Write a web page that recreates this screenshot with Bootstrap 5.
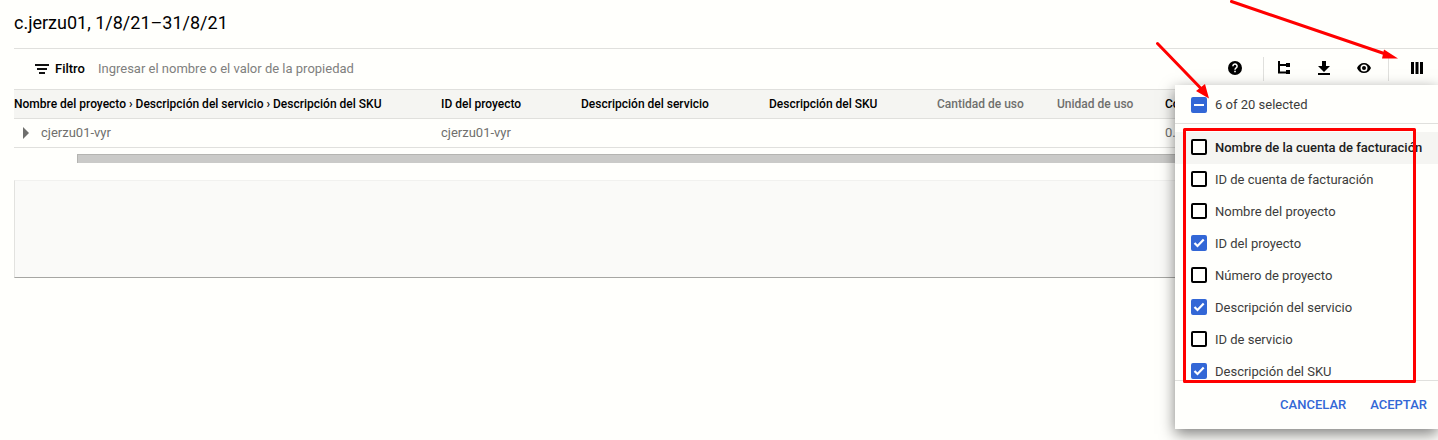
<!DOCTYPE html>
<html lang="es">
<head>
<meta charset="utf-8">
<meta name="viewport" content="width=device-width, initial-scale=1">
<title>Informe de costos</title>
<link rel="stylesheet" href="https://cdn.jsdelivr.net/npm/bootstrap@5.3.0/dist/css/bootstrap.min.css">
<style>
  body { font-family: Roboto, "Liberation Sans", sans-serif; font-size: 13px; line-height: 20px; background: #fffffc; color: #000; }
  .report { padding-left: 14px; }
  .report-title { font-size: 18px; line-height: 24px; padding: 11px 0 13px; font-weight: 400; }
  .toolbar { height: 41px; border-top: 1px solid #e0e0dd; padding-left: 20px; padding-right: 1px; }
  .filter-label { font-weight: 500; margin-left: 5px; margin-right: 13px; }
  .filter-input { border: 0; background: transparent; outline: 0; padding: 0; font-size: 13px; line-height: 20px; color: #000; }
  .filter-input::placeholder { color: #80807e; opacity: 1; }
  .tool-btn { display: flex; align-items: center; justify-content: center; width: 40px; height: 40px; padding: 0 0 2px; border: 0; border-radius: 0; color: #000; }
  .tool-sep { width: 1px; height: 24px; background: #e0e0dd; }
  .cost-table { table-layout: fixed; width: 100%; border-top: 1px solid #e0e0dd; margin: 0; white-space: nowrap; }
  .cost-table th, .cost-table td { height: 29px; padding: 0; overflow: hidden; border-bottom: 1px solid #e0e0dd; vertical-align: middle; }
  .cost-table th { background: #f5f5f2; font-weight: 500; font-size: 12px; }
  .cost-table th.muted, .cost-table td { color: #6f6f6d; }
  .c-path { width: 427px; } .c-id { width: 140px; } .c-service { width: 188px; }
  .c-sku { width: 168px; } .c-qty { width: 120px; } .c-unit { width: 108px; }
  .expander { border: 0; background: transparent; padding: 0 0 0 9px; width: 27px; line-height: 0; }
  .scroll-thumb { margin: 6px 0 0 63px; height: 9px; background: #cacac8; border: 1px solid #b4b4b1; border-width: 1px 0 0 1px; }
  .detail-panel { margin-top: 17px; height: 98px; background: #fafaf8; border: 1px solid #f1f1ef; border-left-color: #e2e2df; border-bottom-color: #a6a6a3; border-right: 0; }
  .column-menu { top: 36px; right: -1px; width: 263px; padding: 0; border: 0; border-radius: 0; background: #fffffc; font-size: 13px; color: #3c3c3b; box-shadow: 0 5px 14px rgba(0,0,0,.5); }
  .menu-row { height: 32px; padding-left: 16px; padding-bottom: 2px; gap: 8px; white-space: nowrap; color: #3c3c3b; }
  .menu-head { height: 39px; padding-top: 4px; border-bottom: 1px solid #e0e0dd; }
  .menu-list { height: 256px; padding-top: 8px; overflow: hidden; }
  .menu-list label { padding-top: 2px; }
  .menu-row.current { background: #f5f5f2; font-weight: 500; color: #202020; }
  .menu-row .form-check-input { width: 16px; height: 16px; margin: 0; flex: none; border: 2px solid #000; border-radius: 2px; background-color: #fffffc; }
  .menu-row .form-check-input:checked, .menu-row .form-check-input:indeterminate { background-color: #3367d6; border-color: #3367d6; background-size: 16px 16px; }
  .menu-row .form-check-input:checked { background-image: url("data:image/svg+xml,%3csvg xmlns='http://www.w3.org/2000/svg' viewBox='0 0 16 16'%3e%3cpath fill='none' stroke='%23fff' stroke-width='2.2' d='M3.5 8l3 3L12.7 4.5'/%3e%3c/svg%3e"); }
  .menu-row .form-check-input:indeterminate { background-image: url("data:image/svg+xml,%3csvg xmlns='http://www.w3.org/2000/svg' viewBox='0 0 16 16'%3e%3cpath fill='none' stroke='%23fff' stroke-width='2' d='M3 8h10'/%3e%3c/svg%3e"); }
  .menu-foot { height: 49px; border-top: 1px solid #e0e0dd; padding-right: 11px; gap: 24px; }
  .menu-foot .btn { padding: 0; border: 0; font-size: 13px; line-height: 20px; font-weight: 500; color: #3367d6; }
  .annotations { position: absolute; top: 0; right: 0; z-index: 1100; pointer-events: none; }
</style>
</head>
<body class="min-vh-100">
<main class="report min-vh-100">
  <h1 class="report-title m-0">c.jerzu01, 1/8/21–31/8/21</h1>

  <div class="toolbar d-flex align-items-center">
    <svg width="16" height="12" viewBox="0 0 16 12" aria-hidden="true"><path d="M1 2h14M3 6h10M5 10h6" stroke="#111" stroke-width="2"/></svg>
    <label class="filter-label" for="filter">Filtro</label>
    <input class="filter-input flex-grow-1" id="filter" type="text" placeholder="Ingresar el nombre o el valor de la propiedad">
    <button class="btn tool-btn" type="button" aria-label="Ayuda">
      <svg width="16" height="16" viewBox="0 0 16 16"><circle cx="8" cy="8" r="7" fill="#000"/><path d="M5.9 6.2a2.1 2.1 0 1 1 3.4 1.6C8.5 8.400 8 8.700 8 9.700" fill="none" stroke="#fff" stroke-width="1.5"/><path d="M7.200 10.700h1.600v1.600H7.200z" fill="#fff"/></svg>
    </button>
    <span class="tool-sep ms-2"></span>
    <button class="btn tool-btn" type="button" aria-label="Agrupar">
      <svg width="16" height="16" viewBox="0 0 16 16"><path d="M3 1v11.500h7M3 5h7" fill="none" stroke="#000" stroke-width="2"/><path d="M10 3h4v4h-4zM10 10h4v4h-4z"/></svg>
    </button>
    <button class="btn tool-btn" type="button" aria-label="Descargar">
      <svg width="16" height="16" viewBox="0 0 16 16"><path d="M6 1h4v5h4l-6 6-6-6h4zM2 13h12v2H2z"/></svg>
    </button>
    <button class="btn tool-btn" type="button" aria-label="Vista previa">
      <svg width="16" height="16" viewBox="0 0 16 16"><path fill-rule="evenodd" d="M8 3C4.800 3 2.200 5 1 8c1.200 3 3.800 5 7 5s5.800-2 7-5c-1.200-3-3.800-5-7-5zm0 1.500a3.500 3.500 0 1 1 0 7 3.500 3.500 0 0 1 0-7z"/><circle cx="8" cy="8" r="2"/></svg>
    </button>
    <span class="tool-sep ms-1 me-2"></span>
    <div class="dropdown">
      <button class="btn tool-btn" type="button" aria-label="Columnas" aria-expanded="true">
        <svg width="16" height="16" viewBox="0 0 16 16"><path d="M2 2h3v12H2zM6.500 2h3v12h-3zM11 2h3v12h-3z"/></svg>
      </button>
      <form class="dropdown-menu column-menu show">
        <div class="menu-head d-flex align-items-center">
          <div class="menu-row d-flex align-items-center"><input class="form-check-input" type="checkbox" id="all"><label for="all">6 of 20 selected</label></div>
        </div>
        <div class="menu-list">
          <div class="menu-row current d-flex align-items-center"><input class="form-check-input" type="checkbox" id="c1"><label for="c1">Nombre de la cuenta de facturación</label></div>
          <div class="menu-row d-flex align-items-center"><input class="form-check-input" type="checkbox" id="c2"><label for="c2">ID de cuenta de facturación</label></div>
          <div class="menu-row d-flex align-items-center"><input class="form-check-input" type="checkbox" id="c3"><label for="c3">Nombre del proyecto</label></div>
          <div class="menu-row d-flex align-items-center"><input class="form-check-input" type="checkbox" id="c4" checked><label for="c4">ID del proyecto</label></div>
          <div class="menu-row d-flex align-items-center"><input class="form-check-input" type="checkbox" id="c5"><label for="c5">Número de proyecto</label></div>
          <div class="menu-row d-flex align-items-center"><input class="form-check-input" type="checkbox" id="c6" checked><label for="c6">Descripción del servicio</label></div>
          <div class="menu-row d-flex align-items-center"><input class="form-check-input" type="checkbox" id="c7"><label for="c7">ID de servicio</label></div>
          <div class="menu-row d-flex align-items-center"><input class="form-check-input" type="checkbox" id="c8" checked><label for="c8">Descripción del SKU</label></div>
        </div>
        <div class="menu-foot d-flex align-items-center justify-content-end">
          <button class="btn" type="button">CANCELAR</button>
          <button class="btn" type="button">ACEPTAR</button>
        </div>
      </form>
    </div>
  </div>

  <table class="cost-table">
    <colgroup><col class="c-path"><col class="c-id"><col class="c-service"><col class="c-sku"><col class="c-qty"><col class="c-unit"><col></colgroup>
    <thead>
      <tr><th>Nombre del proyecto › Descripción del servicio › Descripción del SKU</th><th>ID del proyecto</th><th>Descripción del servicio</th><th>Descripción del SKU</th><th class="muted">Cantidad de uso</th><th class="muted">Unidad de uso</th><th>Costo</th></tr>
    </thead>
    <tbody>
      <tr>
        <td><div class="d-flex align-items-center"><button class="expander" type="button" aria-label="Expandir"><svg class="d-block" width="6" height="12" viewBox="0 0 6 12"><path d="M0 0l6 6-6 6z" fill="#6f6f6d"/></svg></button>cjerzu01-vyr</div></td>
        <td>cjerzu01-vyr</td><td></td><td></td><td></td><td></td><td>0.00</td>
      </tr>
    </tbody>
  </table>
  <div class="scroll-thumb"></div>
  <section class="detail-panel" aria-label="Detalle"></section>
</main>

<svg class="annotations" width="298" height="400" viewBox="1140 0 298 400" aria-hidden="true">
  <g stroke="#f00" stroke-width="3" stroke-linecap="round" fill="none">
    <path d="M1231.500 1.500L1387 54.500M1157.500 43.500L1201 88.500"/>
    <rect x="1184.500" y="129.500" width="230" height="252" stroke-linejoin="round"/>
  </g>
  <path fill="#f00" d="M1398 58.500l-14-9-2 9zM1209 98.500l-4-14.500-9 7z"/>
</svg>

<script src="https://cdn.jsdelivr.net/npm/bootstrap@5.3.0/dist/js/bootstrap.bundle.min.js"></script>
<script>document.getElementById('all').indeterminate = true;</script>
</body>
</html>
